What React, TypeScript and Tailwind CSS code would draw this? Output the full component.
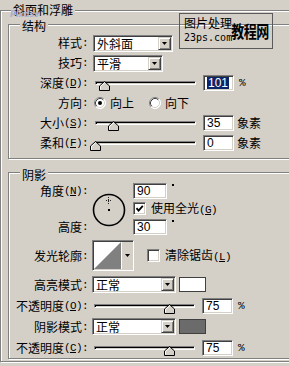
import React from "react";

const sunken =
  "border border-t-[#808080] border-l-[#808080] border-b-white border-r-white shadow-[inset_1px_1px_0_#404040,inset_-1px_-1px_0_#d4d0c8]";
const raised =
  "border border-t-[#d4d0c8] border-l-[#d4d0c8] border-b-[#404040] border-r-[#404040] shadow-[inset_1px_1px_0_#fff,inset_-1px_-1px_0_#808080]";
const mono = "font-['Liberation_Mono',monospace] text-[11px] tracking-[-0.6px]";
const sans = "font-['Liberation_Sans',sans-serif] text-[12px]";
const etched =
  "relative border border-[#808080] shadow-[inset_1px_1px_0_#fff,1px_1px_0_#fff]";

function Arrow() {
  return (
    <svg width="5" height="3" viewBox="0 0 5 3">
      <polygon points="0,0 5,0 2.5,3" fill="#000" />
    </svg>
  );
}

function Label({ cn, hot }: { cn: string; hot?: string }) {
  return (
    <div className="flex w-[79px] shrink-0 items-center justify-end whitespace-nowrap">
      <span>{cn}</span>
      {hot && (
        <span className={mono}>
          (<span className="underline">{hot}</span>)
        </span>
      )}
      <span className={mono}>:</span>
    </div>
  );
}

function Select({ w, text }: { w: string; text: string }) {
  return (
    <div className={`flex h-[17px] shrink-0 bg-white p-[1px] ${w} ${sunken}`}>
      <div className="flex flex-1 items-center pl-[2px] leading-[13px]">{text}</div>
      <div className={`flex w-[13px] items-center justify-center bg-[#d4d0c8] ${raised}`}>
        <Arrow />
      </div>
    </div>
  );
}

function Slider({ pos }: { pos: number }) {
  return (
    <div className="relative ml-[2px] flex h-[20px] w-[101px] shrink-0 items-center">
      <div className="h-[4px] w-full border border-t-[#808080] border-l-[#808080] border-b-white border-r-white bg-[#d4d0c8] shadow-[inset_1px_1px_0_#000]" />
      <svg
        className="absolute top-[8px]"
        style={{ left: pos }}
        width="11"
        height="10"
        viewBox="0 0 11 10"
      >
        <polygon points="0.5,9.5 0.5,5 5.5,0.5 10.5,5 10.5,9.5" fill="#d4d0c8" stroke="#000" />
        <polyline points="1.5,8.5 1.5,5.4 5.5,1.9" fill="none" stroke="#fff" />
      </svg>
    </div>
  );
}

function Field({ v, w, sel }: { v: string; w: string; sel?: boolean }) {
  return (
    <div className={`flex h-[16px] shrink-0 items-center bg-white pl-[3px] ${w} ${sunken} ${sans} leading-[12px]`}>
      {sel ? <span className="bg-[#0a246a] px-[1px] text-white">{v}</span> : <span>{v}</span>}
    </div>
  );
}

function Radio({ on }: { on?: boolean }) {
  return (
    <svg width="12" height="12" viewBox="0 0 12 12" className="shrink-0">
      <circle cx="6" cy="6" r="5.5" fill="#fff" />
      <path d="M2.11,9.89 A5.5,5.5 0 0 1 9.89,2.11" fill="none" stroke="#808080" />
      <path d="M2.82,9.18 A4.5,4.5 0 0 1 9.18,2.82" fill="none" stroke="#404040" />
      <path d="M9.89,2.11 A5.5,5.5 0 0 1 2.11,9.89" fill="none" stroke="#fff" />
      <path d="M9.18,2.82 A4.5,4.5 0 0 1 2.82,9.18" fill="none" stroke="#d4d0c8" />
      {on && <circle cx="6" cy="6" r="2" fill="#000" />}
    </svg>
  );
}

function Check({ on }: { on?: boolean }) {
  return (
    <div className={`flex h-[13px] w-[13px] shrink-0 items-center justify-center bg-white ${sunken}`}>
      {on && (
        <svg width="9" height="9" viewBox="0 0 9 9">
          <polyline points="1.5,4.2 3.6,6.6 7.8,1.8" fill="none" stroke="#000" strokeWidth="1.8" />
        </svg>
      )}
    </div>
  );
}

function Row({ children }: { children: React.ReactNode }) {
  return <div className="flex h-[20px] items-center">{children}</div>;
}

function Deg() {
  return <span className="ml-[5px] mt-[2px] h-[2px] w-[2px] self-start bg-black" />;
}

export default function App() {
  return (
    <div className="relative h-[366px] w-[289px] overflow-hidden bg-[#d4d0c8] font-['Noto_Sans_CJK_SC',sans-serif] text-[12px] leading-[14px] text-black">
      <div className="pt-[10px]">
        <div className={`${etched} h-[352px] w-[330px] pl-[7px] pt-[13px]`}>
          <span className="absolute left-[10px] top-[-8px] bg-[#d4d0c8] px-[2px]">斜面和浮雕</span>

          {/* 结构 */}
          <div className={`${etched} w-[320px] pb-[5px] pt-[8px]`}>
            <span className="absolute left-[11px] top-[-6px] bg-[#d4d0c8] px-[2px]">结构</span>
            <Row>
              <Label cn="样式" />
              <div className="ml-[5px]">
                <Select w="w-[80px]" text="外斜面" />
              </div>
            </Row>
            <Row>
              <Label cn="技巧" />
              <div className="ml-[5px]">
                <Select w="w-[70px]" text="平滑" />
              </div>
            </Row>
            <Row>
              <Label cn="深度" hot="D" />
              <div className="ml-[5px] flex items-center">
                <Slider pos={4} />
                <div className="ml-[7px]">
                  <Field v="101" w="w-[31px]" sel />
                </div>
                <span className={`ml-[5px] ${mono}`}>%</span>
              </div>
            </Row>
            <Row>
              <Label cn="方向" />
              <div className="ml-[6px] flex items-center">
                <Radio on />
                <span className="ml-[4px]">向上</span>
                <span className="ml-[15px] flex">
                  <Radio />
                </span>
                <span className="ml-[4px]">向下</span>
              </div>
            </Row>
            <Row>
              <Label cn="大小" hot="S" />
              <div className="ml-[5px] flex items-center">
                <Slider pos={13} />
                <div className="ml-[7px]">
                  <Field v="35" w="w-[31px]" />
                </div>
                <span className="ml-[3px]">象素</span>
              </div>
            </Row>
            <Row>
              <Label cn="柔和" hot="F" />
              <div className="ml-[5px] flex items-center">
                <Slider pos={-5} />
                <div className="ml-[7px]">
                  <Field v="0" w="w-[31px]" />
                </div>
                <span className="ml-[3px]">象素</span>
              </div>
            </Row>
          </div>

          {/* 阴影 */}
          <div className={`${etched} mt-[13px] w-[320px] pt-[9px]`}>
            <span className="absolute left-[11px] top-[-5px] bg-[#d4d0c8] px-[2px]">阴影</span>
            <div className="flex">
              <div className="flex w-[79px] shrink-0 flex-col justify-between">
                <div className="flex h-[17px] items-center justify-end">
                  <Label cn="角度" hot="N" />
                </div>
                <div className="flex h-[17px] items-center justify-end">
                  <Label cn="高度" />
                </div>
              </div>
              <div className="ml-[4px] mt-[11px] h-[34px] w-[34px] shrink-0">
                <svg width="34" height="34" viewBox="0 0 34 34">
                  <circle cx="17" cy="17" r="15.5" fill="none" stroke="#000" strokeWidth="1.6" />
                  <rect x="16" y="16" width="2" height="2" fill="#000" />
                  <line x1="14" y1="7.5" x2="20" y2="7.5" stroke="#222" strokeDasharray="1 1" />
                  <line x1="16.5" y1="4" x2="16.5" y2="11" stroke="#222" strokeDasharray="1 1" />
                </svg>
              </div>
              <div className="ml-[7px] flex flex-col gap-[1px]">
                <div className="flex h-[17px] items-center">
                  <Field v="90" w="w-[34px]" />
                  <Deg />
                </div>
                <div className="flex h-[17px] items-center">
                  <Check on />
                  <span className="ml-[5px] whitespace-nowrap">
                    使用全光<span className={mono}>(<span className="underline">G</span>)</span>
                  </span>
                </div>
                <div className="flex h-[17px] items-center">
                  <Field v="30" w="w-[34px]" />
                  <Deg />
                </div>
              </div>
            </div>

            <div className="mt-[5px] flex h-[31px] items-center">
              <Label cn="发光轮廓" />
              <div className={`ml-[4px] flex h-[31px] w-[42px] shrink-0 bg-white p-[1px] ${sunken}`}>
                <svg width="27" height="27" viewBox="0 0 27 27" className="shrink-0">
                  <rect width="27" height="27" fill="#fff" />
                  <polygon points="0,27 27,0 27,27" fill="#808080" />
                </svg>
                <div className="flex flex-1 items-center justify-center border-l border-white bg-[#d4d0c8]">
                  <Arrow />
                </div>
              </div>
              <div className="ml-[13px] flex items-center">
                <Check />
                <span className="ml-[5px] whitespace-nowrap">
                  清除锯齿<span className={mono}>(<span className="underline">L</span>)</span>
                </span>
              </div>
            </div>

            <div className="mt-[3px] flex flex-col">
              <div className="flex h-[21px] items-center">
                <Label cn="高亮模式" />
                <div className="ml-[4px]">
                  <Select w="w-[84px]" text="正常" />
                </div>
                <div className="ml-[3px] h-[15px] w-[27px] border border-[#404040] bg-white" />
              </div>
              <div className="flex h-[21px] items-center">
                <Label cn="不透明度" hot="O" />
                <div className="ml-[4px] flex items-center">
                  <Slider pos={70} />
                  <div className="ml-[7px]">
                    <Field v="75" w="w-[31px]" />
                  </div>
                  <span className={`ml-[5px] ${mono}`}>%</span>
                </div>
              </div>
              <div className="flex h-[21px] items-center">
                <Label cn="阴影模式" />
                <div className="ml-[4px]">
                  <Select w="w-[84px]" text="正常" />
                </div>
                <div className="ml-[3px] h-[15px] w-[27px] border border-[#404040] bg-[#6b6b6b]" />
              </div>
              <div className="flex h-[21px] items-center">
                <Label cn="不透明度" hot="C" />
                <div className="ml-[4px] flex items-center">
                  <Slider pos={70} />
                  <div className="ml-[7px]">
                    <Field v="75" w="w-[31px]" />
                  </div>
                  <span className={`ml-[5px] ${mono}`}>%</span>
                </div>
              </div>
            </div>
          </div>
        </div>
      </div>

      {/* faint watermark */}
      <span className="absolute left-[10px] top-[11px] font-['DejaVu_Sans',sans-serif] text-[8px] font-bold italic leading-[8px] text-[#a9b0cf]">
        Pixdss
      </span>

      {/* watermark box */}
      <div className="absolute left-[179px] top-[13px] flex h-[36px] w-[94px] border border-[#5a5a5a]">
        <div className="flex flex-col pl-[4px] pt-[3px]">
          <span className="leading-[12px]">图片处理</span>
          <span className="mt-[3px] font-['DejaVu_Sans_Mono',monospace] text-[10px] leading-[11px]">23ps.com</span>
        </div>
        <span className="ml-[-1px] mt-[12px] scale-y-[1.3] text-[13px] font-bold leading-[13px] tracking-[-0.5px]">
          教程网
        </span>
      </div>
    </div>
  );
}
